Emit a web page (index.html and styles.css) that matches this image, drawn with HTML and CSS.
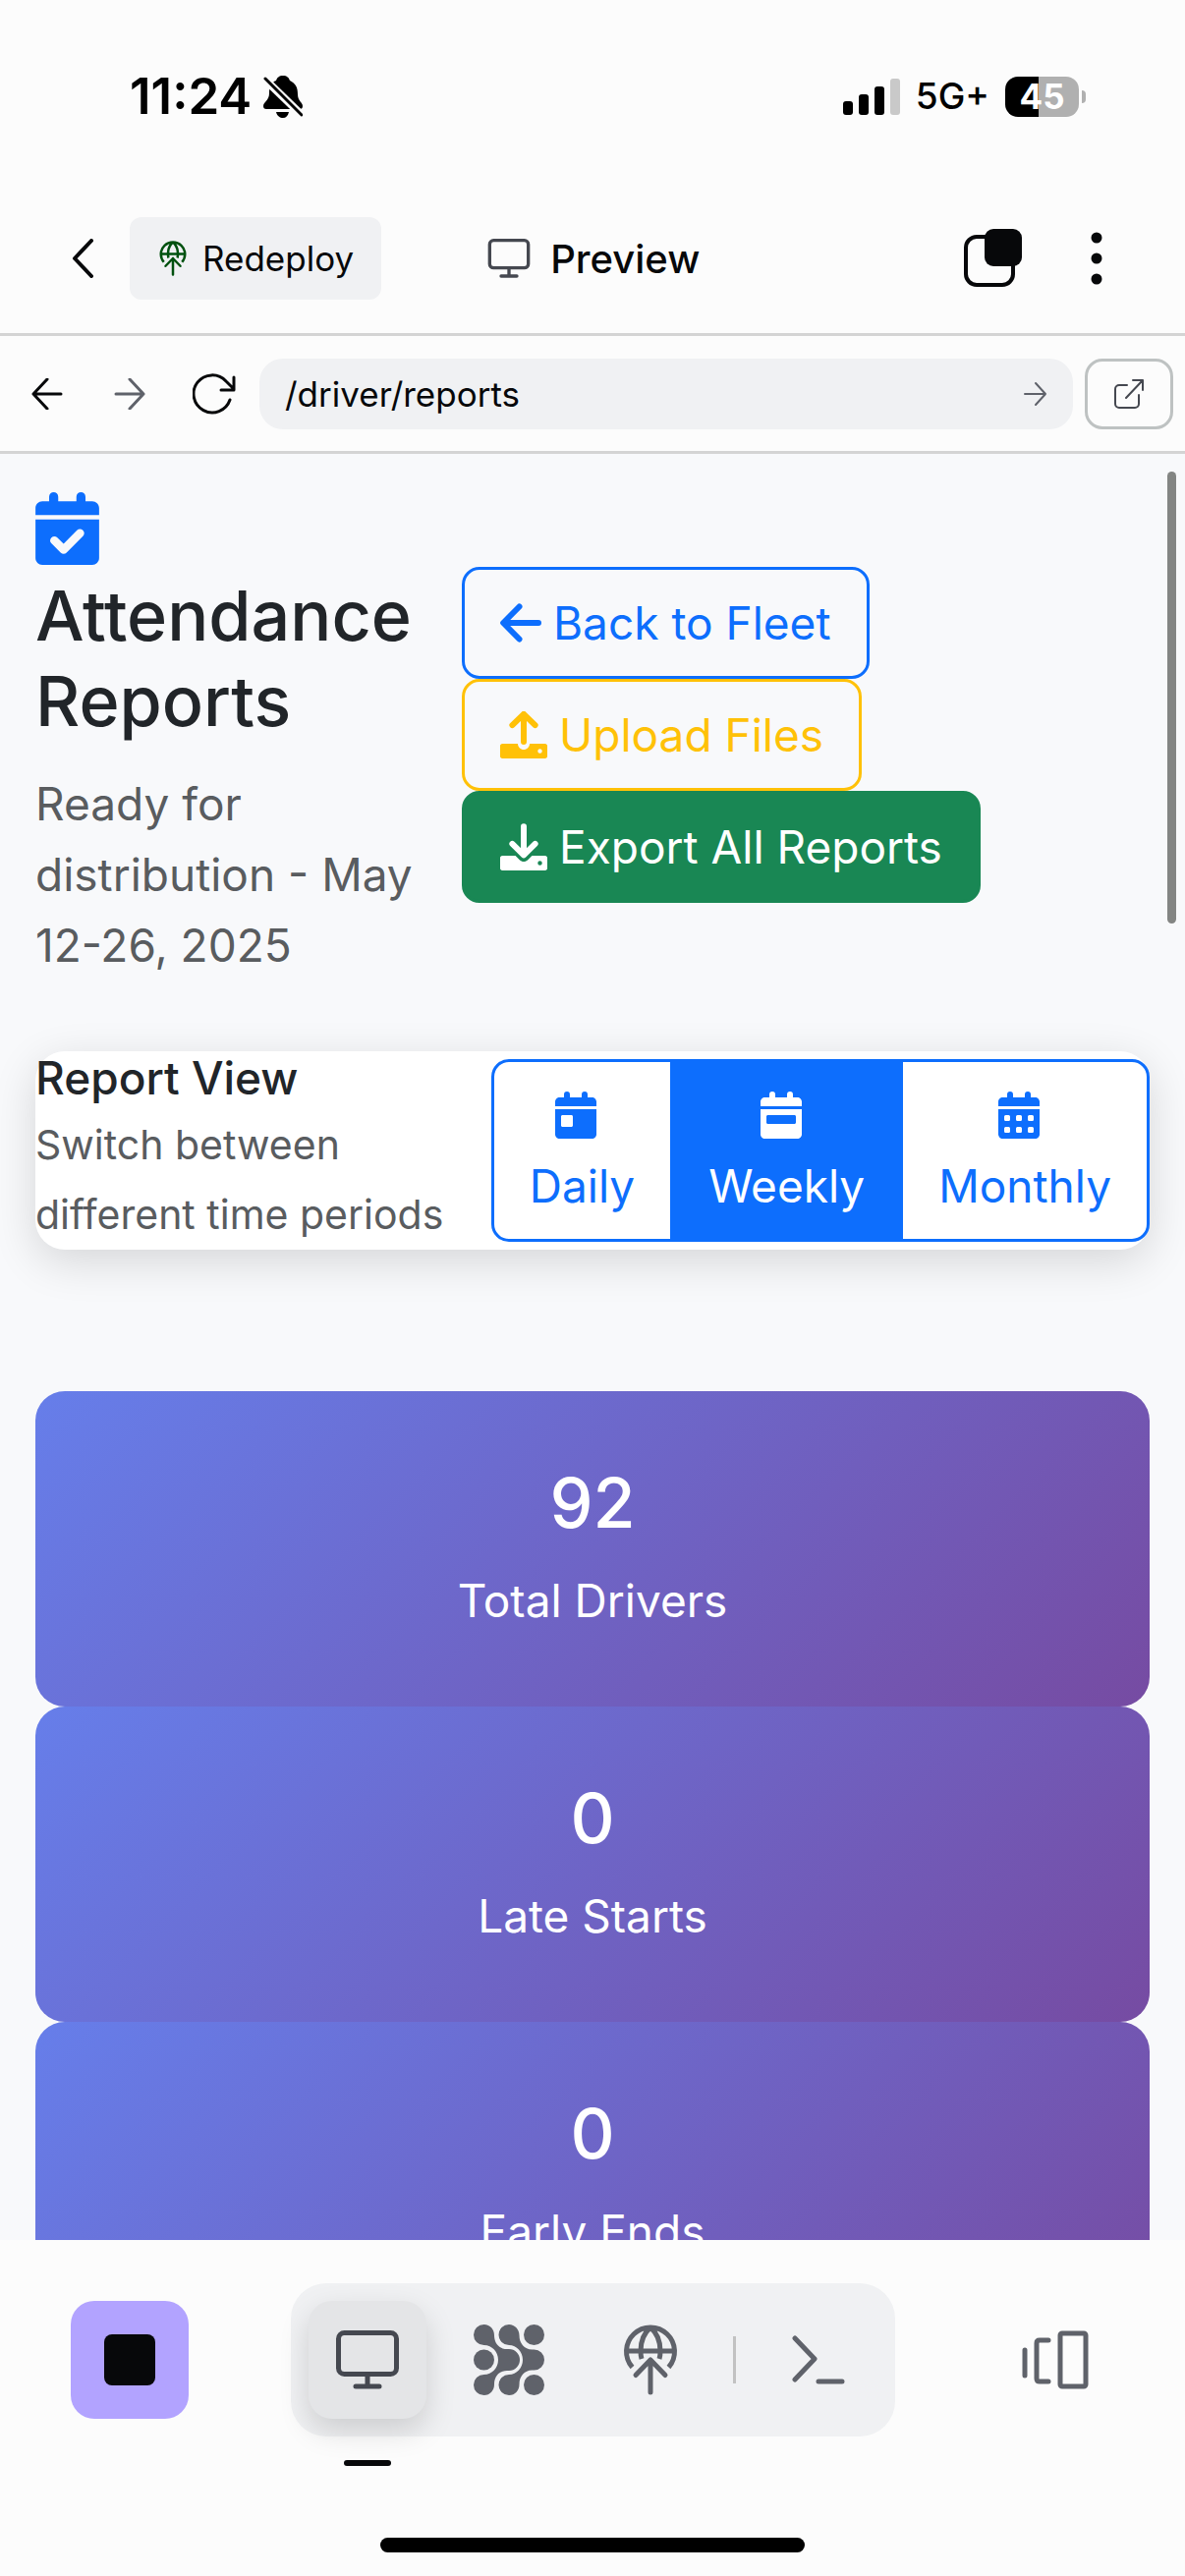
FILE: index.html
```html
<!DOCTYPE html>
<html lang="en">
<head>
<meta charset="utf-8">
<meta name="viewport" content="width=device-width, initial-scale=1">
<title>Attendance Reports</title>
<link rel="stylesheet" href="styles.css">
</head>
<body>
<svg class="defs" aria-hidden="true">
  <symbol id="deploy" viewBox="0 0 72 72">
    <g fill="none" stroke="currentColor" stroke-width="5" stroke-linejoin="round">
      <path d="M17.500 43.500a24.500 24.500 0 1 1 37 0M12 27h48M36 3c-7 6-10 14-10 24 0 3 0 5 1 8M36 3c7 6 10 14 10 24 0 3 0 5-1 8"/>
      <path stroke-linecap="round" d="M36 69V36M21 51.500l15-15.500 15 15.500"/>
    </g>
  </symbol>
  <symbol id="monitor" viewBox="0 0 64 60">
    <g fill="none" stroke="currentColor" stroke-width="5" stroke-linecap="round">
      <rect x="2.500" y="2.500" width="59" height="42" rx="6"/>
      <path d="M32 45v12M20 57h24"/>
    </g>
  </symbol>
</svg>

<div class="screen">
  <header class="status">
    <div class="status-left">
      <span class="clock">11:24</span>
      <svg class="bell" viewBox="0 0 40 43">
        <path d="M20 0c4 0 6 2 7 5 6 3 8 7 8 14 0 7 5 8 5 12 0 2-1 3-3 3H3c-2 0-3-1-3-3 0-4 6-6 6-13C6 11 8 7 13 5c1-3 3-5 7-5zM13 37h13c-1 4-3 6-6 6s-6-2-7-6z"/>
        <path d="M2 4l37 36" stroke="#fcfcfc" stroke-width="8"/>
        <path d="M2 3l37 37" stroke="#000" stroke-width="3" stroke-linecap="round"/>
      </svg>
    </div>
    <div class="status-right">
      <svg class="bars" viewBox="0 0 58 37">
        <rect y="23" width="10" height="14" rx="3"/><rect x="16" y="16" width="10" height="21" rx="3"/><rect x="32" y="8" width="10" height="29" rx="3"/><rect x="48" width="10" height="37" rx="3" fill="#c9c9c9"/>
      </svg>
      <span class="network">5G+</span>
      <span class="battery">45</span>
    </div>
  </header>

  <nav class="topbar">
    <button class="icon-button back" aria-label="Back"><svg width="22" height="40" viewBox="0 0 22 40"><path d="M20 2L3 20l17 18" fill="none" stroke="currentColor" stroke-width="4" stroke-linecap="round" stroke-linejoin="round"/></svg></button>
    <button class="redeploy"><svg width="36" height="36"><use href="#deploy"/></svg>Redeploy</button>
    <div class="title"><svg width="44" height="40"><use href="#monitor"/></svg>Preview</div>
    <div class="top-actions">
      <button class="icon-button" aria-label="Tabs"><svg width="60" height="60" viewBox="0 0 60 60"><rect x="3" y="8" width="48" height="49" rx="11" fill="none" stroke="currentColor" stroke-width="4"/><rect x="22" width="38" height="38" rx="9" fill="currentColor"/></svg></button>
      <button class="icon-button" aria-label="More"><svg width="12" height="54" viewBox="0 0 12 54" fill="currentColor"><circle cx="6" cy="6" r="5.500"/><circle cx="6" cy="27" r="5.500"/><circle cx="6" cy="48" r="5.500"/></svg></button>
    </div>
  </nav>

  <form class="addressbar">
    <button type="button" class="icon-button" aria-label="Go back"><svg width="32" height="32" viewBox="0 0 32 32"><path d="M30 16H2M16 1L2 16l14 15" class="line"/></svg></button>
    <button type="button" class="icon-button muted" aria-label="Go forward"><svg width="32" height="32" viewBox="0 0 32 32"><path d="M2 16h28M16 1l14 15-14 15" class="line"/></svg></button>
    <button type="button" class="icon-button reload" aria-label="Reload"><svg width="44" height="42" viewBox="0 0 44 42"><path d="M38 27A19 19 0 1 1 34 8l8 8M42 4v13H29" class="line"/></svg></button>
    <div class="field">
      <input type="text" value="/driver/reports" aria-label="Address">
      <button class="icon-button muted" aria-label="Go"><svg width="24" height="26" viewBox="0 0 24 26"><path d="M1 13h21M12 2l10 11-10 11" class="line thin"/></svg></button>
    </div>
    <button type="button" class="external" aria-label="Open in new tab"><svg width="30" height="32" viewBox="0 0 30 32"><path d="M13 7H5a4 4 0 0 0-4 4v15a4 4 0 0 0 4 4h16a4 4 0 0 0 4-4v-9M19 2h10v10M29 2L12 20" class="line thin"/></svg></button>
  </form>

  <main class="page">
    <section class="intro">
      <div class="intro-text">
        <svg class="calendar-check" viewBox="0 0 448 512"><path fill-rule="evenodd" d="M0 464c0 26 22 48 48 48h352c26 0 48-22 48-48V192H0zM112 320c12-12 30-12 42 0l44 44 94-96c12-12 30-12 42 0s12 30 0 42L219 425c-12 12-30 12-42 0l-65-65c-12-12-12-28 0-40zM400 64h-48V32a32 32 0 0 0-64 0v32H160V32a32 32 0 0 0-64 0v32H48c-26 0-48 22-48 48v48h448v-48c0-26-22-48-48-48z"/></svg>
        <h1>Attendance Reports</h1>
        <p>Ready for distribution - May 12-26, 2025</p>
      </div>
      <div class="actions">
        <a href="#fleet" class="btn btn-blue"><svg width="42" height="48" viewBox="0 0 448 512"><path d="M416 256H40M208 80L34 256l174 176" class="thick"/></svg>Back to Fleet</a>
        <button class="btn btn-yellow"><svg width="48" height="48" viewBox="0 0 512 512"><path d="M256 330V36M132 150L256 30l124 120" class="thick"/><path fill-rule="evenodd" d="M0 376c0-14 10-24 24-24h168c0 35 29 64 64 64s64-29 64-64h168c14 0 24 10 24 24v112c0 14-10 24-24 24H24c-14 0-24-10-24-24zM432 408a24 24 0 1 0 0 48 24 24 0 0 0 0-48z"/></svg>Upload Files</button>
        <button class="btn btn-green"><svg width="48" height="48" viewBox="0 0 512 512"><path d="M256 34v300M132 222l124 124 124-124" class="thick"/><path fill-rule="evenodd" d="M0 376c0-14 10-24 24-24h142l45 45c25 25 65 25 90 0l45-45h142c14 0 24 10 24 24v112c0 14-10 24-24 24H24c-14 0-24-10-24-24zM432 408a24 24 0 1 0 0 48 24 24 0 0 0 0-48z"/></svg>Export All Reports</button>
      </div>
    </section>

    <section class="view-card">
      <div class="view-text">
        <h2>Report View</h2>
        <small>Switch between different time periods</small>
      </div>
      <div class="segments" role="group" aria-label="Report view">
        <button><svg viewBox="0 0 448 512"><path fill-rule="evenodd" d="M0 464c0 26 22 48 48 48h352c26 0 48-22 48-48V192H0zM64 272c0-9 7-16 16-16h96c9 0 16 7 16 16v96c0 9-7 16-16 16H80c-9 0-16-7-16-16zM400 64h-48V32a32 32 0 0 0-64 0v32H160V32a32 32 0 0 0-64 0v32H48c-26 0-48 22-48 48v48h448v-48c0-26-22-48-48-48z"/></svg>Daily</button>
        <button class="active" aria-pressed="true"><svg viewBox="0 0 448 512"><path fill-rule="evenodd" d="M0 464c0 26 22 48 48 48h352c26 0 48-22 48-48V192H0zM64 272c0-9 7-16 16-16h288c9 0 16 7 16 16v64c0 9-7 16-16 16H80c-9 0-16-7-16-16zM400 64h-48V32a32 32 0 0 0-64 0v32H160V32a32 32 0 0 0-64 0v32H48c-26 0-48 22-48 48v48h448v-48c0-26-22-48-48-48z"/></svg>Weekly</button>
        <button><svg viewBox="0 0 448 512"><path fill-rule="evenodd" d="M0 464c0 26 22 48 48 48h352c26 0 48-22 48-48V192H0zM80 256h32q16 0 16 16v32q0 16-16 16H80q-16 0-16-16v-32q0-16 16-16zM208 256h32q16 0 16 16v32q0 16-16 16h-32q-16 0-16-16v-32q0-16 16-16zM336 256h32q16 0 16 16v32q0 16-16 16h-32q-16 0-16-16v-32q0-16 16-16zM80 384h32q16 0 16 16v32q0 16-16 16H80q-16 0-16-16v-32q0-16 16-16zM208 384h32q16 0 16 16v32q0 16-16 16h-32q-16 0-16-16v-32q0-16 16-16zM336 384h32q16 0 16 16v32q0 16-16 16h-32q-16 0-16-16v-32q0-16 16-16zM400 64h-48V32a32 32 0 0 0-64 0v32H160V32a32 32 0 0 0-64 0v32H48c-26 0-48 22-48 48v48h448v-48c0-26-22-48-48-48z"/></svg>Monthly</button>
      </div>
    </section>

    <section class="stats">
      <div class="stat"><strong>92</strong><span>Total Drivers</span></div>
      <div class="stat"><strong>0</strong><span>Late Starts</span></div>
      <div class="stat"><strong>0</strong><span>Early Ends</span></div>
    </section>
    <div class="scroll-thumb"></div>
  </main>

  <footer class="footer">
    <div class="tools">
      <button class="stop" aria-label="Stop"><span></span></button>
      <div class="dock">
        <button class="tool selected" aria-label="Preview"><svg width="64" height="60"><use href="#monitor"/></svg></button>
        <button class="tool" aria-label="Agent"><svg width="72" height="72" viewBox="0 0 72 72" fill="currentColor"><path d="M10.500 0C17 0 21 5 21 11c0 8 5 14 13 14h2a11 11 0 0 1 0 22h-2c-8 0-13 6-13 14 0 6-4 11-10.500 11a10.500 10.500 0 0 1 0-21C19 51 25 44 25 36S19 21 10.500 21a10.500 10.500 0 0 1 0-21z"/><path d="M36 0c6 0 10.500 5 10.500 11 0 8 5 14.500 13 14.500h2a10.500 10.500 0 0 1 0 21h-2c-8 0-13 6.500-13 14.500 0 6-4 11-10.500 11a10.500 10.500 0 0 1 0-21C44 51 50 44 50 36S44 21 36 21a10.500 10.500 0 0 1 0-21z"/><circle cx="61.500" cy="10.500" r="10.500"/><circle cx="10.500" cy="36" r="10.500"/><circle cx="61.500" cy="61.500" r="10.500"/></svg></button>
        <button class="tool" aria-label="Deploy"><svg width="72" height="72"><use href="#deploy"/></svg></button>
        <span class="divider"></span>
        <button class="tool" aria-label="Shell"><svg width="54" height="50" viewBox="0 0 54 50"><path d="M3 3l20 21L3 45M27 47h24" fill="none" stroke="currentColor" stroke-width="5" stroke-linecap="round" stroke-linejoin="round"/></svg></button>
      </div>
      <button class="icon-button switcher" aria-label="All tabs"><svg width="68" height="60" viewBox="0 0 68 60" fill="none" stroke="currentColor" stroke-width="5" stroke-linecap="round" stroke-linejoin="round"><path d="M3 20v26M27 10H18q-3 0-3 3v36q0 3 3 3h9"/><rect x="39" y="3" width="26" height="54" rx="2"/></svg></button>
    </div>
    <div class="home"></div>
  </footer>
</div>
</body>
</html>
```

FILE: styles.css
```css
* { box-sizing: border-box; }
body {
  margin: 0;
  background: #fcfcfc;
  color: #07080a;
  font-family: Inter, "Liberation Sans", sans-serif;
}
button, input { font: inherit; color: inherit; border: 0; background: none; padding: 0; margin: 0; }
h1, h2, p { margin: 0; font-weight: 500; }
svg { display: block; flex: none; }
.defs { position: absolute; width: 0; height: 0; }
.line { fill: none; stroke: currentColor; stroke-width: 3; stroke-linecap: round; stroke-linejoin: round; }
.thin { stroke-width: 2; }
.thick { fill: none; stroke: currentColor; stroke-width: 64; stroke-linecap: round; stroke-linejoin: round; }

.screen { display: flex; flex-direction: column; height: 100vh; }

.status {
  display: flex;
  justify-content: space-between;
  align-items: center;
  padding: 68px 100px 0 132px;
  color: #000;
}
.status-left, .status-right { display: flex; align-items: center; }
.status-left { gap: 12px; }
.status-right { gap: 16px; }
.clock { font-size: 51px; line-height: 60px; font-weight: 600; }
.bell { width: 40px; height: 43px; }
.bars { width: 58px; height: 37px; }
.network { font-size: 37px; line-height: 60px; font-weight: 500; }
.battery {
  position: relative;
  width: 75px;
  border-radius: 13px;
  background: linear-gradient(90deg, #000 34px, #b0b0b0 34px);
  color: #fff;
  font-size: 35px;
  line-height: 41px;
  font-weight: 700;
  text-align: center;
  margin-right: 8px;
}
.battery::after {
  content: "";
  position: absolute;
  left: 78px;
  top: 14px;
  width: 4px;
  height: 13px;
  border-radius: 0 4px 4px 0;
  background: #b0b0b0;
}

.icon-button { display: flex; align-items: center; justify-content: center; }
.muted { color: #5f626a; }

.topbar {
  display: flex;
  align-items: center;
  margin-top: 93px;
  padding: 0 84px 34px 73px;
  border-bottom: 3px solid #d4d4d4;
}
.redeploy {
  display: flex;
  align-items: center;
  gap: 12px;
  height: 84px;
  margin-left: 37px;
  padding: 0 28px 0 26px;
  border-radius: 12px;
  background: #f0f1f3;
  font-size: 35px;
}
.redeploy svg { color: #00510f; }
.title {
  display: flex;
  align-items: center;
  gap: 20px;
  margin: 0 auto 0 108px;
  font-size: 40px;
  font-weight: 500;
}
.title svg { color: #454850; }
.top-actions { display: flex; align-items: center; gap: 70px; }

.addressbar {
  display: flex;
  align-items: center;
  padding: 23px 12px 22px 32px;
  border-bottom: 3px solid #d4d4d4;
  gap: 12px;
}
.addressbar > .muted { margin: 0 36px 0 40px; }
.field {
  display: flex;
  align-items: center;
  flex: 1;
  height: 72px;
  margin-left: 12px;
  padding: 0 26px 0 26px;
  border-radius: 24px;
  background: #f0f1f3;
}
.field input { flex: 1; min-width: 0; font-size: 35px; }
.external {
  display: flex;
  align-items: center;
  justify-content: center;
  width: 90px;
  height: 72px;
  border: 3px solid #bec2c2;
  border-radius: 18px;
  color: #454850;
}

.page {
  position: relative;
  flex: 1;
  min-height: 0;
  overflow: hidden;
  padding: 36px 36px 0;
  background: #f8f9fb;
  color: #212529;
}
.scroll-thumb {
  position: absolute;
  top: 18px;
  right: 9px;
  width: 9px;
  height: 460px;
  border-radius: 5px;
  background: #838583;
}
.intro { display: flex; align-items: center; gap: 48px; }
.intro-text { flex: 0 0 386px; }
.calendar-check { width: 65px; height: 74px; margin: 3px 0 8px; fill: #0d6efd; }
.intro h1 { font-size: 70px; line-height: 87px; margin-bottom: 25px; }
.intro p { font-size: 46px; line-height: 72px; font-weight: 400; color: #595c5f; }
.actions { display: flex; flex-direction: column; align-items: flex-start; }
.btn {
  display: flex;
  align-items: center;
  gap: 12px;
  padding: 18px 36px;
  border: 3px solid;
  border-radius: 18px;
  font-size: 46px;
  line-height: 72px;
  text-decoration: none;
  white-space: nowrap;
}
.btn svg { fill: currentColor; }
.btn-blue { color: #0d6efd; }
.btn-yellow { color: #ffc107; }
.btn-green { color: #fff; background: #198754; border-color: #198754; }

.view-card {
  display: flex;
  align-items: center;
  justify-content: space-between;
  margin-top: 72px;
  border-radius: 30px;
  background: #fff;
  box-shadow: 0 12px 45px rgba(0, 0, 0, 0.14);
}
.view-text { flex: 1; }
.view-text h2 { font-size: 46px; line-height: 54px; margin-bottom: 6px; }
.view-text small { display: block; font-size: 41px; line-height: 71px; color: #595c5f; }
.segments { display: flex; }
.segments button {
  display: flex;
  flex-direction: column;
  align-items: center;
  padding: 18px 36px;
  border: 3px solid #0d6efd;
  color: #0d6efd;
  font-size: 46px;
  line-height: 72px;
}
.segments button + button { margin-left: -3px; }
.segments button:first-child { border-radius: 18px 0 0 18px; }
.segments button:last-child { border-radius: 0 18px 18px 0; }
.segments .active { background: #0d6efd; color: #fff; }
.segments svg { width: 42px; height: 48px; margin: 12px 12px 12px 0; fill: currentColor; }

.stats { margin-top: 144px; }
.stat {
  display: flex;
  flex-direction: column;
  align-items: center;
  gap: 21px;
  padding: 72px;
  border-radius: 30px;
  background: linear-gradient(135deg, #667eea 0%, #764ba2 100%);
  color: #fff;
}
.stat strong { font-size: 70px; line-height: 84px; font-weight: 500; }
.stat span { font-size: 46px; line-height: 72px; }

.footer { padding: 44px 72px 24px; }
.tools { display: flex; align-items: center; justify-content: space-between; color: #5f626a; }
.stop {
  display: flex;
  align-items: center;
  justify-content: center;
  width: 120px;
  height: 120px;
  border-radius: 24px;
  background: #b2a3ff;
}
.stop span { width: 52px; height: 52px; border-radius: 8px; background: #07080a; }
.dock {
  display: flex;
  align-items: center;
  padding: 18px;
  gap: 24px;
  border-radius: 36px;
  background: #f0f1f3;
}
.tool { position: relative; display: flex; align-items: center; justify-content: center; width: 120px; height: 120px; border-radius: 24px; }
.selected { background: #e4e5e7; color: #454850; box-shadow: 0 12px 30px rgba(0, 0, 0, 0.15); }
.selected::after {
  content: "";
  position: absolute;
  left: 36px;
  top: 162px;
  width: 48px;
  height: 6px;
  border-radius: 3px;
  background: #07080a;
}
.divider { width: 3px; height: 48px; background: #c2c2c2; }
.switcher { width: 120px; }
.home { width: 432px; height: 15px; margin: 103px auto 0; border-radius: 8px; background: #000; }
```
